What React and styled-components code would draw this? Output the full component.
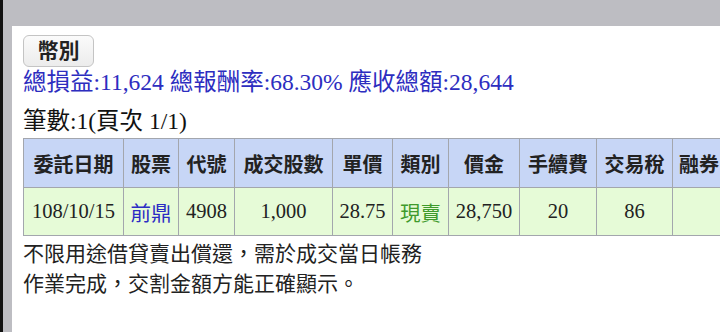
import * as React from 'react'
import styled, { createGlobalStyle } from 'styled-components'

const GlobalStyle = createGlobalStyle`
    html, body {
        margin: 0;
        padding: 0;
        overflow: hidden;
        background: #bdbdc2;
    }
`

const SERIF = `"Liberation Serif", "Noto Sans CJK TC", serif`
const SANS = `"Liberation Sans", "Noto Sans CJK TC", sans-serif`

const Frame = styled.div`
    height: 332px;
    box-sizing: border-box;
    border-left: 3px solid #111;
    padding: 26px 0 0 9px;
    background: #bdbdc2;
`

const Page = styled.div`
    height: 100%;
    background: #fff;
    padding: 9px 0 0 11px;
    box-sizing: border-box;
    overflow: hidden;
`

const CurrencyButton = styled.button`
    display: block;
    width: 71px;
    height: 32px;
    padding: 0;
    border: 1px solid #c4c4c4;
    border-radius: 6px;
    background: linear-gradient(#fbfbfb, #ececec);
    font-family: ${SANS};
    font-size: 21px;
    font-weight: bold;
    color: #222;
    line-height: 30px;
`

const Summary = styled.div`
    font-family: ${SERIF};
    font-size: 23.5px;
    line-height: 30px;
    color: #2d2dbf;
    white-space: nowrap;
`

const Count = styled.div`
    margin-top: 9px;
    font-family: ${SERIF};
    font-size: 23.5px;
    line-height: 30px;
    color: #111;
`

const Table = styled.table`
    margin-top: 2px;
    border-collapse: collapse;
    table-layout: fixed;
    width: 730px;
`

const HeadCell = styled.th`
    height: 48px;
    padding: 0;
    border: 1px solid #a3a6ad;
    background: #c7d6f6;
    font-family: ${SANS};
    font-size: 20px;
    font-weight: bold;
    color: #222;
    white-space: nowrap;
    overflow: hidden;
    text-align: ${p => (p.$left ? 'left' : 'center')};
    padding-left: ${p => (p.$left ? '6px' : '0')};
`

const Cell = styled.td`
    height: 47px;
    padding: 0;
    border: 1px solid #a3a6ad;
    background: #e6fbd7;
    font-family: ${p => (p.$cjk ? SANS : SERIF)};
    font-size: 20.5px;
    color: ${p => p.$color || '#222'};
    text-align: center;
    white-space: nowrap;
`

const Note = styled.div`
    margin-top: 1px;
    font-family: "Noto Sans CJK TC", sans-serif;
    font-size: 21px;
    line-height: 30px;
    color: #222;
`

const columns = [
    { title: '委託日期', width: 100 },
    { title: '股票', width: 55 },
    { title: '代號', width: 56 },
    { title: '成交股數', width: 98 },
    { title: '單價', width: 60 },
    { title: '類別', width: 56 },
    { title: '價金', width: 71 },
    { title: '手續費', width: 77 },
    { title: '交易稅', width: 76 },
    { title: '融券', width: 81, left: true },
]

const row = [
    { value: '108/10/15' },
    { value: '前鼎', cjk: true, color: '#2c2cc4' },
    { value: '4908' },
    { value: '1,000' },
    { value: '28.75' },
    { value: '現賣', cjk: true, color: '#3f9a2c' },
    { value: '28,750' },
    { value: '20' },
    { value: '86' },
    { value: '' },
]

const App = () => (
    <>
        <GlobalStyle />
        <Frame>
            <Page>
                <CurrencyButton type="button">幣別</CurrencyButton>
                <Summary>總損益:11,624 總報酬率:68.30% 應收總額:28,644</Summary>
                <Count>筆數:1(頁次 1/1)</Count>
                <Table>
                    <colgroup>
                        {columns.map(col => (
                            <col key={col.title} style={{ width: col.width }} />
                        ))}
                    </colgroup>
                    <thead>
                        <tr>
                            {columns.map(col => (
                                <HeadCell key={col.title} $left={col.left}>
                                    {col.title}
                                </HeadCell>
                            ))}
                        </tr>
                    </thead>
                    <tbody>
                        <tr>
                            {row.map((cell, i) => (
                                <Cell key={i} $cjk={cell.cjk} $color={cell.color}>
                                    {cell.value}
                                </Cell>
                            ))}
                        </tr>
                    </tbody>
                </Table>
                <Note>
                    不限用途借貸賣出償還，需於成交當日帳務
                    <br />
                    作業完成，交割金額方能正確顯示。
                </Note>
            </Page>
        </Frame>
    </>
)

export default App
